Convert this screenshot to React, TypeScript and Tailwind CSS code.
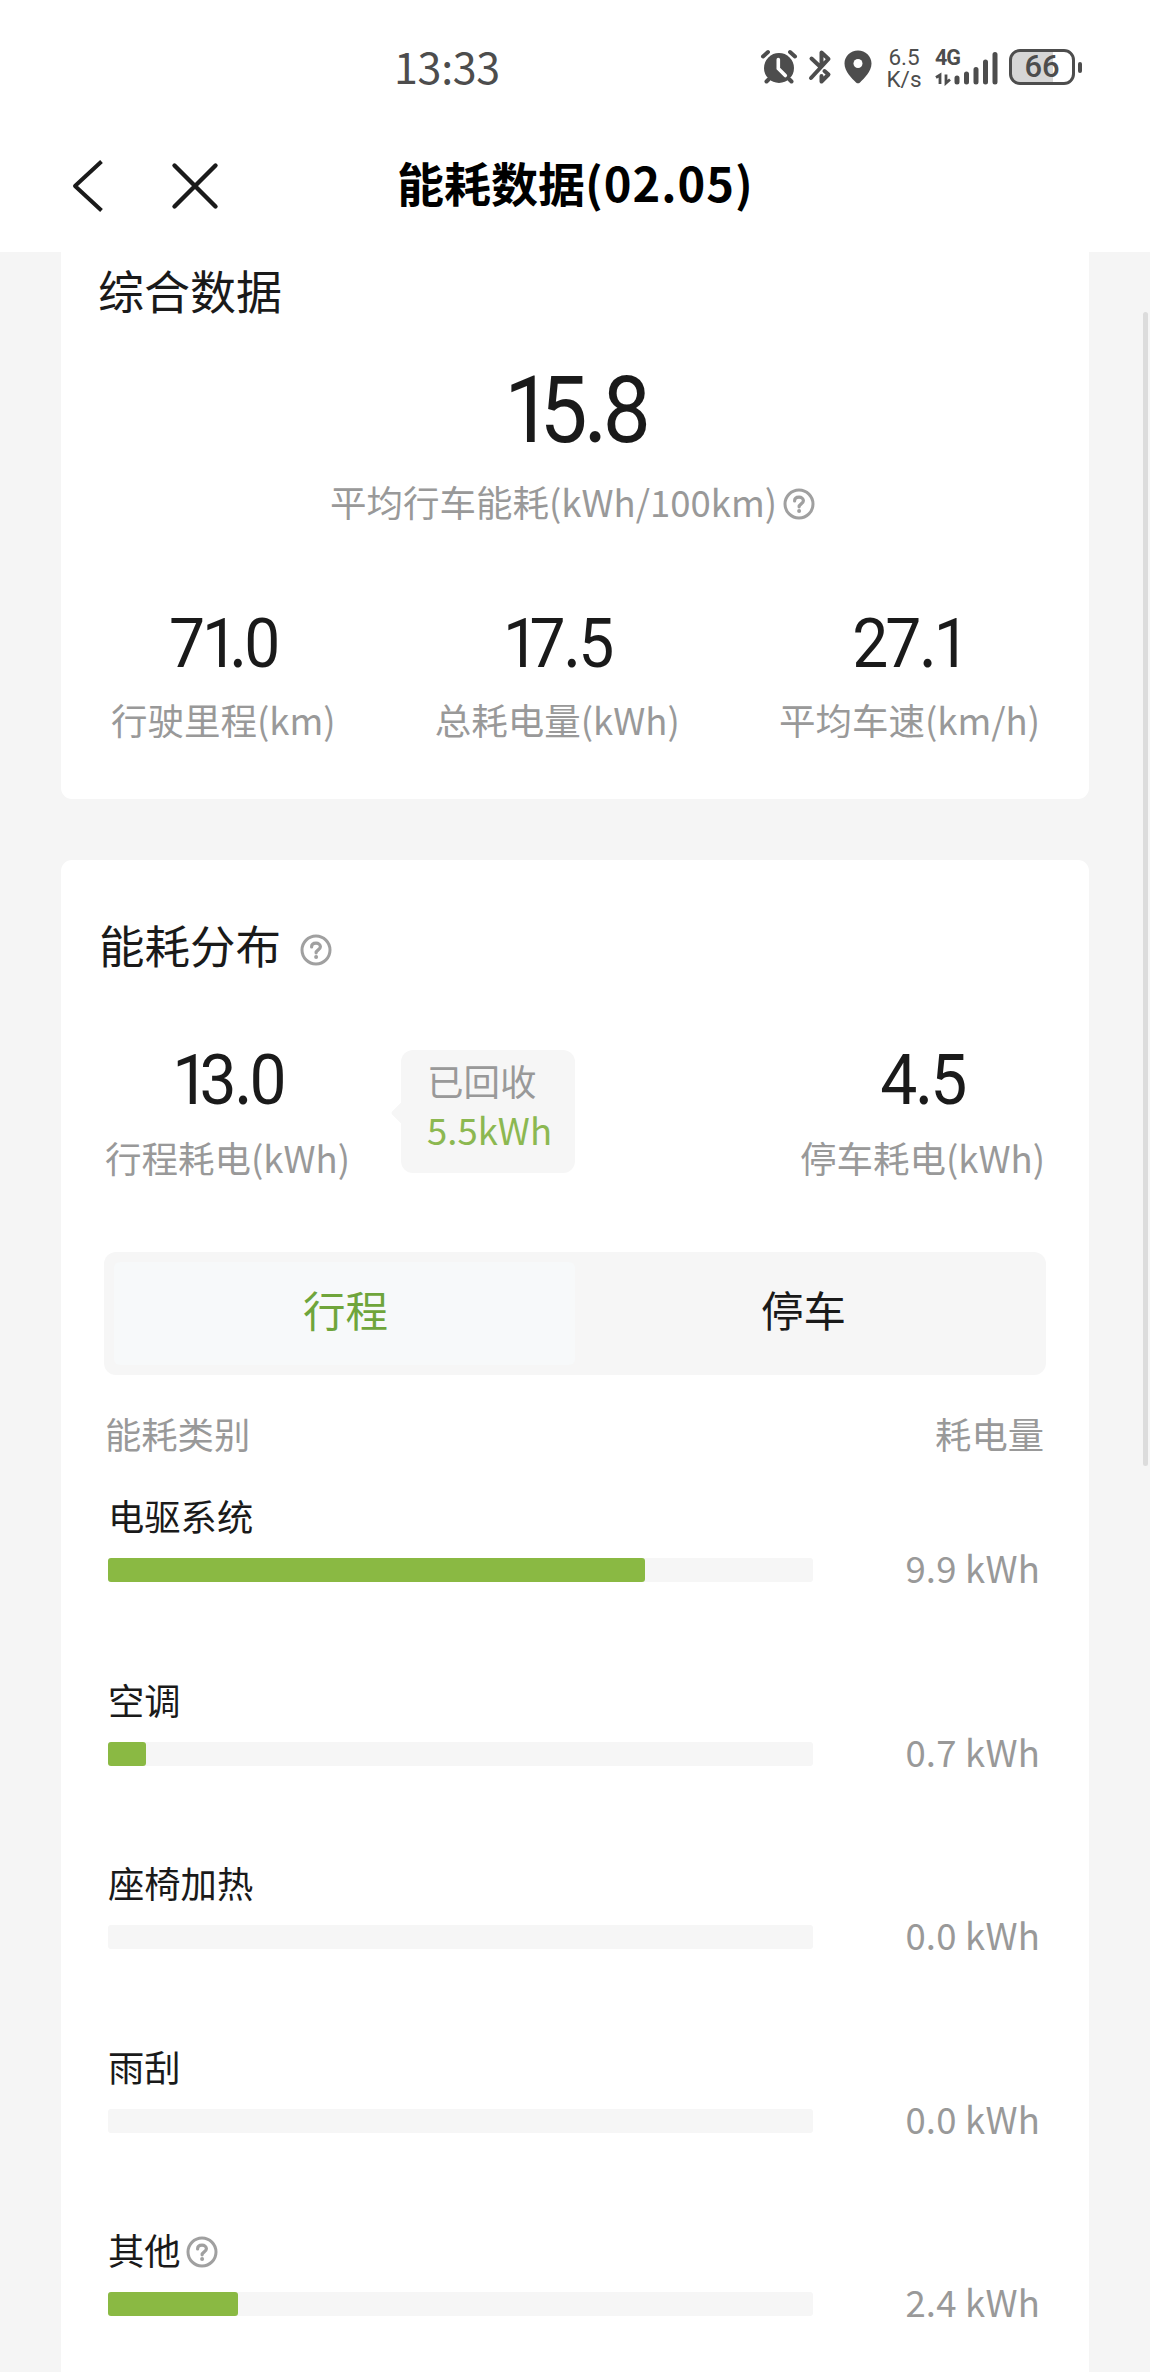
import React from "react";

const CJK = "font-['Noto_Sans_CJK_SC',sans-serif]";

function HelpIcon({ className = "" }: { className?: string }) {
  return (
    <svg className={"shrink-0 " + className} width="32" height="32" viewBox="0 0 32 32" fill="none" stroke="#a0a0a0">
      <circle cx="16" cy="16" r="14" strokeWidth="3" />
      <path d="M11.600 13c0-2.500 1.900-3.900 4.400-3.900s4.400 1.500 4.400 3.700c0 3-4.300 3.200-4.300 6" strokeWidth="3.200" strokeLinecap="round" />
      <circle cx="16.100" cy="23" r="2" fill="#a0a0a0" stroke="none" />
    </svg>
  );
}

/* Large reading: narrow digits, with a tight "1" and a round decimal point. */
function Figure({ value, className }: { value: string; className: string }) {
  return (
    <div className={"flex scale-x-[0.93] items-baseline whitespace-nowrap font-['Roboto'] text-[#1a1a1a] " + className}>
      {value.split("").map((ch, i) => (
        <span
          key={i}
          className={
            ch === "."
              ? "mx-[0.03em] font-['Lato']"
              : ch === "1"
                ? "tracking-[-0.15em] last:tracking-[-0.05em]"
                : ""
          }
        >
          {ch}
        </span>
      ))}
    </div>
  );
}

function Stat({ value, label, size, className = "" }: { value: string; label: string; size: string; className?: string }) {
  return (
    <div className={"flex flex-col items-center " + className}>
      <Figure value={value} className={"leading-[70px] tracking-[-0.05em] " + size} />
      <div className="mt-[19px] whitespace-nowrap text-[36.500px] leading-[50px] text-[#999]">{label}</div>
    </div>
  );
}

function StatusBar() {
  return (
    <div className="flex h-[134px] items-center pr-[67px] text-[#4d4d4d]">
      <div className="-mt-[4px] ml-[394px] w-[366px] text-[43px] leading-[50px] tracking-[-0.3px]">13:33</div>
      <svg width="38" height="36" viewBox="0 0 38 36" fill="none" stroke="#4d4d4d">
        <circle cx="19" cy="19" r="15" fill="#4d4d4d" stroke="none" />
        <path d="M3 7.500 8 3M35 7.500 30 3M8.500 30.500 6.500 32.500M29.500 30.500 31.500 32.500" strokeWidth="4" strokeLinecap="round" />
        <path d="M18.300 10.500V19.500l7 7" stroke="#fff" strokeWidth="3.600" strokeLinecap="round" />
      </svg>
      <svg className="ml-[10px]" width="24" height="36" viewBox="0 0 24 36" fill="none" stroke="#4d4d4d" strokeWidth="4" strokeLinejoin="round" strokeLinecap="round">
        <path d="M3 29 20.500 10 13.500 3.500V16M3.500 9.500 12 17.500" />
        <path d="M16.500 22 20.500 25.500 13.500 32.500V27" />
      </svg>
      <svg className="ml-[11px]" width="30" height="36" viewBox="0 0 30 36">
        <path d="M15 1.500C7.500 1.500 1.500 7.300 1.500 14.500 1.500 22.500 9 29.500 13 33.500q2 1.700 4 0C21 29.500 28.500 22.500 28.500 14.500 28.500 7.300 22.500 1.500 15 1.500Z" fill="#4d4d4d" />
        <circle cx="15" cy="14.500" r="4.500" fill="#fff" />
      </svg>
      <div className="ml-[13px] mt-[3px] w-[36px] text-center font-['Roboto'] text-[22.500px] leading-[21.500px]">
        6.5
        <br />
        K/s
      </div>
      <div className="relative ml-[13px] h-[38px] w-[64px]">
        <span className="absolute top-0 left-0 font-['Roboto'] text-[21.500px] font-bold leading-[20px] tracking-[-1px]">4G</span>
        <svg width="64" height="38" viewBox="0 0 64 38" stroke="#4d4d4d" fill="none">
          <path d="M22 30v4M31.500 26v8M41 21.500v12.500M50.500 14v20M60 6.500v27.500" strokeWidth="5" strokeLinecap="round" />
          <path d="M1 29.500 5 27v9M11 26.500v8.500l4-3.500" strokeWidth="2.800" />
        </svg>
      </div>
      <div className="ml-[10px] flex h-[36px] w-[66px] items-center justify-center rounded-[11px] border-[3px] border-[#4d4d4d] bg-linear-to-r from-[#d6d6d6] from-[68%] to-white to-[68%] font-['Roboto'] text-[31px] font-medium leading-[30px]">
        66
      </div>
      <div className="ml-[3px] h-[11px] w-[4px] rounded-[2px] bg-[#4d4d4d]" />
    </div>
  );
}

function Header() {
  return (
    <header className="flex h-[118px] items-start bg-white">
      <svg className="ml-[70px] mt-[24px]" width="36" height="56" viewBox="0 0 36 56" fill="none" stroke="#1a1a1a" strokeWidth="4" strokeLinejoin="round">
        <path d="M31.500 3.500 5 28 31.500 52.500" />
      </svg>
      <svg className="ml-[64px] mt-[27px]" width="50" height="50" viewBox="0 0 50 50" fill="none" stroke="#1a1a1a" strokeWidth="4.400" strokeLinecap="round">
        <path d="M4.500 4.500 45.500 45.500M45.500 4.500 4.500 45.500" />
      </svg>
      <h1 className="ml-[177px] mt-[13px] whitespace-nowrap text-[47px] font-bold leading-[70px] text-black">
        能耗数据<span className="tracking-[1px]">(02.05)</span>
      </h1>
    </header>
  );
}

const categories = [
  { name: "电驱系统", value: "9.9", fill: 537 },
  { name: "空调", value: "0.7", fill: 38 },
  { name: "座椅加热", value: "0.0", fill: 0 },
  { name: "雨刮", value: "0.0", fill: 0 },
  { name: "其他", value: "2.4", fill: 130, help: true },
];

export default function App() {
  return (
    <div className={"relative h-[2372px] w-[1150px] overflow-hidden bg-[#f5f5f5] " + CJK}>
      <div className="bg-white">
        <StatusBar />
        <Header />
      </div>

      <section className="mx-[61px] h-[547px] rounded-b-[11px] bg-white">
        <h2 className="pl-[37px] pt-[7px] text-[46px] leading-[60px] text-[#1a1a1a]">综合数据</h2>
        <div className="flex flex-col items-center">
          <Figure value="15.8" className="mt-[38px] h-[100px] text-[92px] leading-[100px] tracking-[-0.06em]" />
          <div className="mt-[20px] flex items-center whitespace-nowrap pr-[5px] text-[36.500px] leading-[50px] text-[#999]">
            <span>平均行车能耗(kWh/100km)</span>
            <HelpIcon className="ml-[6px] mt-[4px]" />
          </div>
        </div>
        <div className="mt-[79px] flex justify-between pl-[50px] pr-[49px]">
          <Stat value="71.0" label="行驶里程(km)" size="h-[70px] text-[69px]" />
          <Stat value="17.5" label="总耗电量(kWh)" size="h-[70px] text-[69px]" />
          <Stat value="27.1" label="平均车速(km/h)" size="h-[70px] text-[69px]" />
        </div>
      </section>

      <section className="mx-[61px] mt-[61px] h-[1520px] rounded-t-[11px] bg-white">
        <div className="flex h-[114px] items-center pl-[38px] pt-[54px]">
          <h2 className="text-[45.500px] leading-[60px] text-[#1a1a1a]">能耗分布</h2>
          <HelpIcon className="ml-[19px] mt-[11px]" />
        </div>

        <div className="flex pl-[44px] pr-[44px] pt-[68px]">
          <Stat value="13.0" label="行程耗电(kWh)" size="h-[72px] text-[71px]" />
          <div className="relative ml-[51px] mt-[8px] h-[123px] w-[174px] rounded-[12px] bg-[#f6f6f6] pl-[26px] pt-[8px] text-[36.500px]">
            <div className="absolute -left-[7px] top-[55px] size-[16px] rotate-45 rounded-[2px] bg-[#f6f6f6]" />
            <div className="leading-[46px] text-[#999]">已回收</div>
            <div className="leading-[51px] text-[#8cb851]">5.5kWh</div>
          </div>
          <Stat value="4.5" label="停车耗电(kWh)" size="h-[72px] text-[71px]" className="ml-auto" />
        </div>

        <div className="ml-[43px] mt-[69px] flex h-[123px] w-[942px] rounded-[12px] bg-[#f6f6f6] p-[10px] text-[42.500px] leading-[94px]">
          <div className="w-[461px] rounded-[6px] bg-[#f7f9fa] pl-[2px] text-center text-[#6fa53b]">行程</div>
          <div className="w-[461px] pr-[4px] text-center text-[#1a1a1a]">停车</div>
        </div>

        <div className="flex justify-between pl-[44px] pr-[45px] pt-[33px] text-[36.300px] leading-[50px] text-[#999]">
          <span>能耗类别</span>
          <span>耗电量</span>
        </div>

        <div className="flex flex-col pl-[47px] pr-[49px] pt-[32px]">
          {categories.map((c) => (
            <div key={c.name} className="h-[183.500px]">
              <div className="flex items-center text-[36.300px] leading-[50px] text-[#1a1a1a]">
                {c.name}
                {c.help && <HelpIcon className="ml-[5px] mt-[6px]" />}
              </div>
              <div className="mt-[18px] flex h-[24px] items-center justify-between">
                <div className="h-[24px] w-[705px] rounded-[3px] bg-[#f6f6f6]">
                  <div className="h-full rounded-[3px] bg-[#8ab943]" style={{ width: c.fill }} />
                </div>
                <div className="-mt-[4px] whitespace-nowrap text-[36.500px] leading-[50px] tracking-[0.2px] text-[#999]">{c.value} kWh</div>
              </div>
            </div>
          ))}
        </div>
      </section>

      <div className="absolute left-[1143px] top-[312px] h-[1154px] w-[5px] rounded-full bg-[#dcdcdc]" />
    </div>
  );
}
